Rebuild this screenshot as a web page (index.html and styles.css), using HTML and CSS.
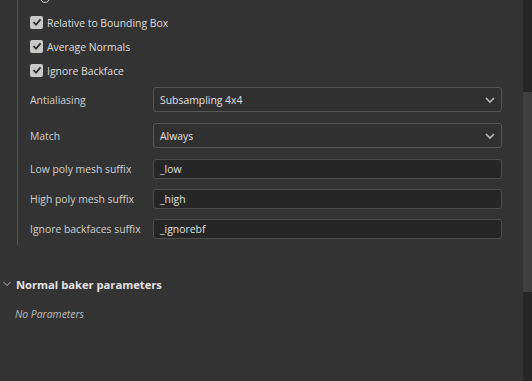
FILE: index.html
```html
<!DOCTYPE html>
<html>
<head>
<meta charset="utf-8">
<link rel="stylesheet" href="styles.css">
</head>
<body>
<div class="app">
  <div class="panel">
    <div class="group">
      <div class="row"><span class="radio"></span></div>
      <div class="row"><span class="check"><svg width="10" height="10" viewBox="0 0 10 10"><path d="M1.5 5.2 L4 7.6 L8.6 2.4" fill="none" stroke="#2e2e2e" stroke-width="1.8"/></svg></span><span class="cb-label">Relative to Bounding Box</span></div>
      <div class="row"><span class="check"><svg width="10" height="10" viewBox="0 0 10 10"><path d="M1.5 5.2 L4 7.6 L8.6 2.4" fill="none" stroke="#2e2e2e" stroke-width="1.8"/></svg></span><span class="cb-label">Average Normals</span></div>
      <div class="row"><span class="check"><svg width="10" height="10" viewBox="0 0 10 10"><path d="M1.5 5.2 L4 7.6 L8.6 2.4" fill="none" stroke="#2e2e2e" stroke-width="1.8"/></svg></span><span class="cb-label">Ignore Backface</span></div>
      <div class="form">
        <div class="label">Antialiasing</div>
        <div class="select"><span>Subsampling 4x4</span><svg width="10" height="8" viewBox="0 0 10 8"><path d="M1 2 L5 6 L9 2" fill="none" stroke="#b8b8b8" stroke-width="1.6"/></svg></div>
        <div class="label">Match</div>
        <div class="select"><span>Always</span><svg width="10" height="8" viewBox="0 0 10 8"><path d="M1 2 L5 6 L9 2" fill="none" stroke="#b8b8b8" stroke-width="1.6"/></svg></div>
        <div class="label">Low poly mesh suffix</div>
        <div class="input">_low</div>
        <div class="label">High poly mesh suffix</div>
        <div class="input">_high</div>
        <div class="label">Ignore backfaces suffix</div>
        <div class="input">_ignorebf</div>
      </div>
    </div>
    <div class="section-head">
      <svg width="8" height="6" viewBox="0 0 8 6"><path d="M0.5 1 L4 4.5 L7.5 1" fill="none" stroke="#bdbdbd" stroke-width="1"/></svg>
      <span>Normal baker parameters</span>
    </div>
    <div class="empty">No Parameters</div>
  </div>
  <div class="scrollbar"><div class="thumb"></div></div>
</div>
</body>
</html>
```
FILE: styles.css
```css
html, body {
  margin: 0;
  padding: 0;
  background: #333333;
  height: 100%;
  overflow: hidden;
}
body {
  font-family: "Open Sans", "Noto Sans", sans-serif;
  font-size: 10.4px;
  color: #d4d4d4;
}
.app {
  display: flex;
  height: 381px;
}
.panel {
  flex: 1;
  overflow: hidden;
}
.group {
  margin-left: 17px;
  margin-top: -14px;
  margin-right: 21px;
  border-left: 1px solid #505050;
  padding-left: 12px;
  padding-bottom: 6px;
}
.row {
  height: 24px;
  display: flex;
  align-items: center;
}
.radio {
  width: 8px;
  height: 8px;
  border: 1.5px solid #c8c8c8;
  border-radius: 50%;
  margin-left: 10px;
}
.check {
  width: 13px;
  height: 13px;
  background: #c9c9c9;
  border-radius: 2px;
  display: flex;
  align-items: center;
  justify-content: center;
  margin-right: 4px;
}
.cb-label {
  color: #dedede;
  padding-top: 1px;
}
.form {
  display: grid;
  grid-template-columns: 123px 1fr;
  margin-top: 5px;
  row-gap: 11px;
  align-items: center;
}
.label {
  color: #d0d0d0;
}
.select {
  height: 23px;
  border: 1px solid #555555;
  border-radius: 3px;
  background: #303030;
  display: flex;
  align-items: center;
  justify-content: space-between;
  padding: 0 6px 0 6px;
  color: #e0e0e0;
}
.input {
  height: 18px;
  border: 1px solid #4c4c4c;
  border-radius: 3px;
  background: #262626;
  display: flex;
  align-items: center;
  padding: 0 6px;
  color: #e0e0e0;
}
.form .input ~ .input,
.form .input ~ .label {
  margin-top: -1px;
}
.section-head {
  display: flex;
  align-items: center;
  height: 28px;
  margin-top: 25px;
  padding-left: 3px;
  gap: 5px;
  font-weight: bold;
  font-size: 11.2px;
  color: #e2e2e2;
}
.empty {
  margin-top: 2px;
  padding-left: 15px;
  font-style: italic;
  color: #bdbdbd;
  height: 28px;
  display: flex;
  align-items: center;
}
.scrollbar {
  width: 9px;
  background: #262626;
  padding-top: 92px;
  box-sizing: border-box;
}
.thumb {
  height: 200px;
  background: #3f3f3f;
}
```
